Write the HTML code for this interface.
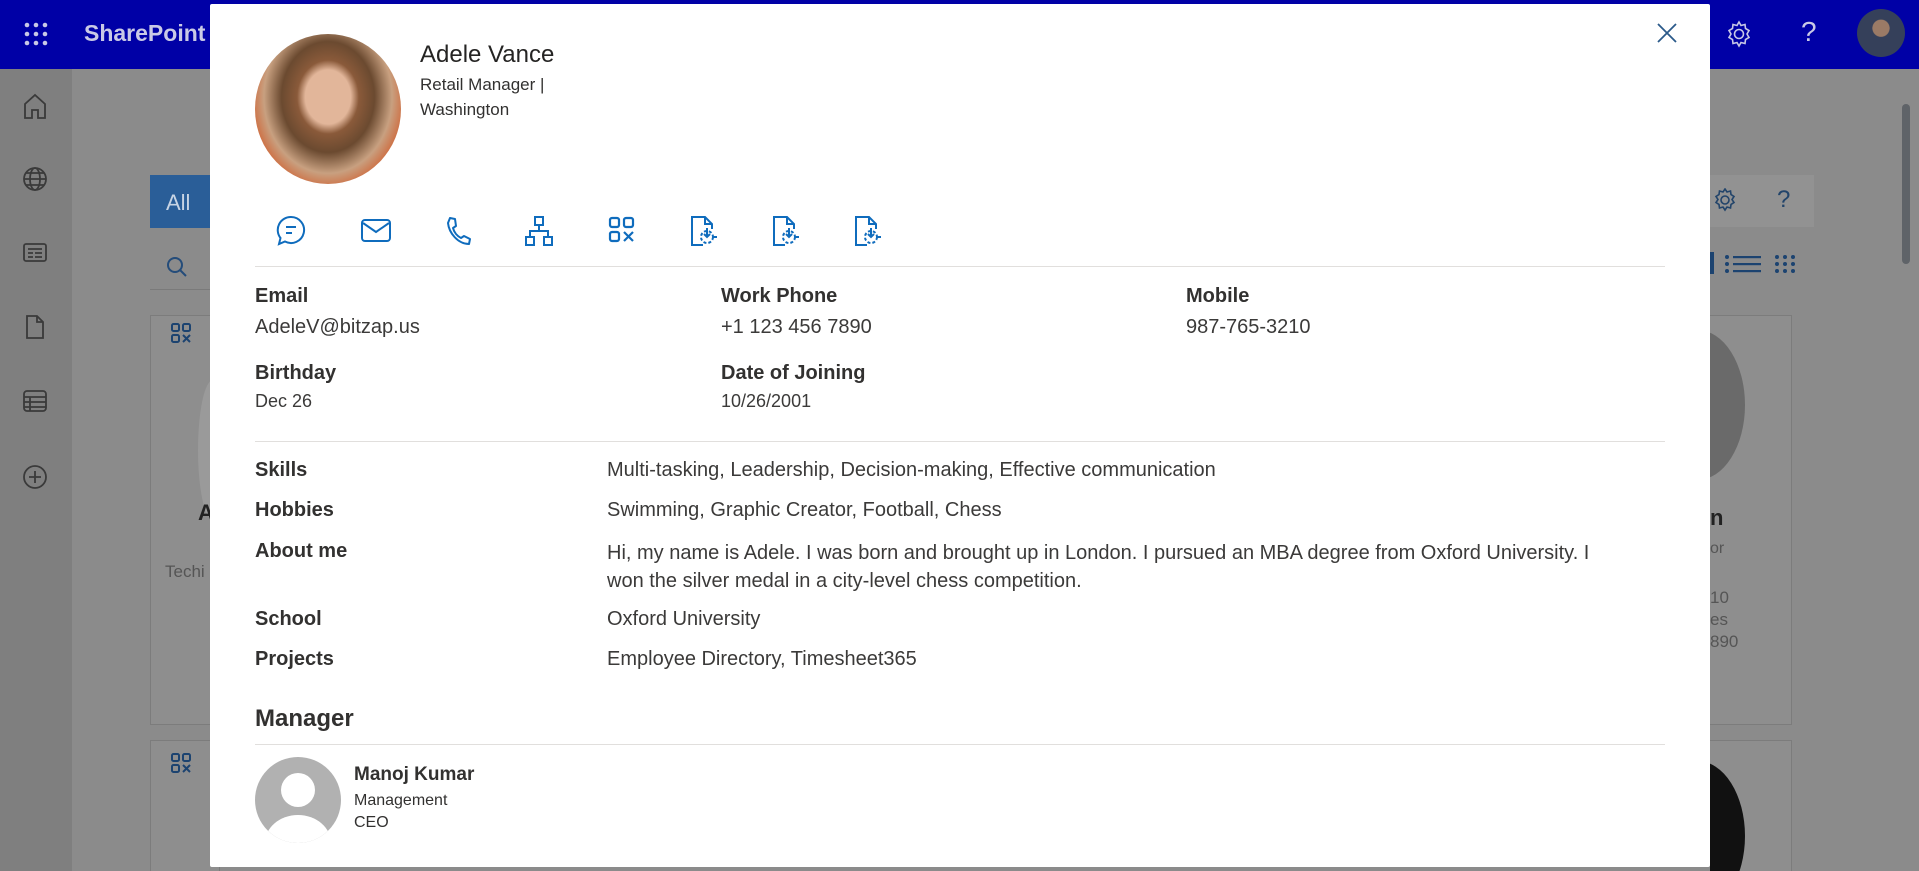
<!DOCTYPE html>
<html style="width:1919px;height:871px;overflow:hidden"><head><meta charset="utf-8"><style>
*{margin:0;padding:0;box-sizing:border-box}
body{width:1919px;height:871px;overflow:hidden;background:#8b8b8b;font-family:"Liberation Sans",sans-serif;position:relative}
.abs{position:absolute}
.hdr{left:0;top:0;width:1919px;height:69px;background:#0000a6}
.rail{left:0;top:69px;width:72px;height:802px;background:#7f7f7f}
.modal{left:210px;top:4px;width:1500px;height:863px;background:#fff;border-radius:2px}
.t{position:absolute;color:#323130;white-space:nowrap}
.lbl{font-size:20px;font-weight:bold;color:#323130}
.val{font-size:20px;color:#3b3a39}
.hr{position:absolute;height:1px;background:#e1dfdd;left:45px;width:1410px}
.ic{position:absolute;top:211px}
</style></head><body>
<div class="abs hdr"></div>
<svg class="abs" style="left:24px;top:22px" width="24" height="24" fill="#c9c9e6"><circle cx="3" cy="3" r="2.3"/><circle cx="12" cy="3" r="2.3"/><circle cx="21" cy="3" r="2.3"/><circle cx="3" cy="12" r="2.3"/><circle cx="12" cy="12" r="2.3"/><circle cx="21" cy="12" r="2.3"/><circle cx="3" cy="21" r="2.3"/><circle cx="12" cy="21" r="2.3"/><circle cx="21" cy="21" r="2.3"/></svg>
<div class="abs" style="left:84px;top:20px;font-size:23px;font-weight:bold;color:#c9c9e6">SharePoint</div>
<svg class="abs" style="left:1725px;top:20px" width="28" height="28" fill="none" stroke="#c9c9e6" stroke-width="1.6"><circle cx="14" cy="14" r="4.5"/><path d="M14 2l2 3.5 4-1 .5 4 3.5 2-2 3.5 2 3.5-3.5 2-.5 4-4-1-2 3.5-2-3.5-4 1-.5-4-3.5-2 2-3.5-2-3.5 3.5-2 .5-4 4 1z"/></svg>
<div class="abs" style="left:1801px;top:16px;font-size:28px;color:#c9c9e6">?</div>
<div class="abs" style="left:1857px;top:9px;width:48px;height:48px;border-radius:50%;background:radial-gradient(circle at 50% 40%,#9a7a66 0 22%,#35405a 24% 100%)"></div>
<div class="abs rail"></div>
<svg class="abs" style="left:22px;top:92px" width="26" height="400" fill="none" stroke="#3a3a3a" stroke-width="1.8">
<path d="M3 26V12L13 3l10 9v14h-7v-8h-6v8z"/>
<g transform="translate(0,74)"><circle cx="13" cy="13" r="11"/><ellipse cx="13" cy="13" rx="5" ry="11"/><path d="M2 13h22M4 7h18M4 19h18"/></g>
<g transform="translate(0,148)"><rect x="2" y="4" width="22" height="17" rx="2"/><path d="M6 9h14M6 13h5M6 17h5M13 13h7M13 17h7"/></g>
<g transform="translate(0,222)"><path d="M5 2h10l6 6v16H5z M15 2v6h6"/></g>
<g transform="translate(0,296)"><rect x="2" y="3" width="22" height="20" rx="3"/><path d="M2 9h22M2 14h22M2 19h22M8 9v14"/></g>
<g transform="translate(0,370)"><circle cx="13" cy="15" r="11"/><path d="M13 9v12M7 15h12"/></g>
</svg>
<div class="abs" style="left:150px;top:175px;width:62px;height:53px;background:#2a5e98"></div>
<div class="abs" style="left:166px;top:190px;color:#c7d4e4;font-size:22px">All</div>
<div class="abs" style="left:150px;top:240px;width:62px;height:50px;border-bottom:1px solid #7a7a7a"></div>
<svg class="abs" style="left:166px;top:256px" width="22" height="22" fill="none" stroke="#244c7a" stroke-width="2"><circle cx="9" cy="9" r="7"/><path d="M14 14l6 6"/></svg>
<div class="abs" style="left:150px;top:315px;width:70px;height:410px;border:1px solid #7c7c7c;background:#8e8e8e"></div>
<div class="abs" style="left:150px;top:740px;width:70px;height:131px;border:1px solid #7c7c7c;border-bottom:none;background:#8e8e8e"></div>
<div class="abs" style="left:198px;top:380px;width:30px;height:140px;border-radius:50%;background:#9a9a9a"></div>
<div class="abs" style="left:198px;top:500px;font-size:22px;font-weight:bold;color:#222">A</div>
<div class="abs" style="left:165px;top:562px;font-size:17px;color:#555">Techi</div>
<div class="abs" style="left:1710px;top:315px;width:82px;height:410px;border:1px solid #7c7c7c;border-left:none;background:#8e8e8e"></div>
<div class="abs" style="left:1650px;top:330px;width:95px;height:150px;border-radius:50%;background:#6a6a6a"></div>
<div class="abs" style="left:1710px;top:505px;font-size:22px;font-weight:bold;color:#222">n</div>
<div class="abs" style="left:1710px;top:540px;font-size:16px;color:#555">or</div>
<div class="abs" style="left:1710px;top:587px;font-size:17px;color:#555;line-height:22px">10<br>es<br>890</div>
<div class="abs" style="left:1710px;top:740px;width:82px;height:131px;border:1px solid #7c7c7c;border-left:none;border-bottom:none;background:#8e8e8e;overflow:hidden"><div style="position:absolute;left:-60px;top:20px;width:95px;height:150px;border-radius:50%;background:#111"></div></div>
<div class="abs" style="left:1710px;top:175px;width:104px;height:52px;background:#929292"></div>
<svg class="abs" style="left:1713px;top:188px" width="24" height="24" fill="none" stroke="#22446a" stroke-width="1.6"><circle cx="12" cy="12" r="4"/><path d="M12 1l2 3 3.5-1 .5 3.5 3 2-2 3 2 3-3 2-.5 3.5-3.5-1-2 3-2-3-3.5 1-.5-3.5-3-2 2-3-2-3 3-2 .5-3.5 3.5 1z"/></svg>
<div class="abs" style="left:1777px;top:186px;font-size:24px;color:#22446a">?</div>
<svg class="abs" style="left:1710px;top:250px" width="96" height="30" fill="#1c4370"><rect x="0" y="2" width="4" height="22"/><circle cx="17" cy="7" r="2"/><circle cx="17" cy="14" r="2"/><circle cx="17" cy="21" r="2"/><rect x="23" y="6" width="28" height="2.2"/><rect x="23" y="13" width="28" height="2.2"/><rect x="23" y="20" width="28" height="2.2"/><g><circle cx="67" cy="7" r="2"/><circle cx="75" cy="7" r="2"/><circle cx="83" cy="7" r="2"/><circle cx="67" cy="14" r="2"/><circle cx="75" cy="14" r="2"/><circle cx="83" cy="14" r="2"/><circle cx="67" cy="21" r="2"/><circle cx="75" cy="21" r="2"/><circle cx="83" cy="21" r="2"/></g></svg>
<div class="abs" style="left:1902px;top:104px;width:8px;height:160px;border-radius:4px;background:#5f6368"></div>
<svg class="abs" style="left:170px;top:322px" width="22" height="22" fill="none" stroke="#1c4370" stroke-width="2"><rect x="2" y="2" width="7" height="7" rx="1.5"/><rect x="13" y="2" width="7" height="7" rx="1.5"/><rect x="2" y="13" width="7" height="7" rx="1.5"/><path d="M13 13l7 7M20 13l-7 7"/></svg>
<svg class="abs" style="left:170px;top:752px" width="22" height="22" fill="none" stroke="#1c4370" stroke-width="2"><rect x="2" y="2" width="7" height="7" rx="1.5"/><rect x="13" y="2" width="7" height="7" rx="1.5"/><rect x="2" y="13" width="7" height="7" rx="1.5"/><path d="M13 13l7 7M20 13l-7 7"/></svg>

<div class="abs modal">
<div class="abs" style="left:45px;top:30px;width:146px;height:150px;border-radius:50%;background:radial-gradient(ellipse at 50% 42%,#e2b69a 0 22%,#8a5a3a 30%,#6b4a30 45%,#c8a080 62%,#d06030 78%,#e8d8c8 90%)"></div>
<div class="t" style="left:210px;top:37px;font-size:24px;color:#252423">Adele Vance</div>
<div class="t" style="left:210px;top:71px;font-size:17px">Retail Manager |</div>
<div class="t" style="left:210px;top:96px;font-size:17px">Washington</div>
<svg class="ic" style="left:66px" width="30" height="32" fill="none" stroke="#0f6cbd" stroke-width="2"><path d="M15 2a13 13 0 1 1-6 24.5L3 29l1.5-6A13 13 0 0 1 15 2z"/><path d="M10 12h10M10 18h6"/></svg>
<svg class="ic" style="left:150px" width="32" height="30" fill="none" stroke="#0f6cbd" stroke-width="2"><rect x="2" y="5" width="28" height="21" rx="3"/><path d="M3 8l13 9 13-9"/></svg>
<svg class="ic" style="left:233px" width="30" height="32" fill="none" stroke="#0f6cbd" stroke-width="2"><path d="M7 3l5 1 1 7-3 2c1 4 4 8 8 10l3-2 6 3-1 5c-11 0-20-11-21-21z" stroke-linejoin="round"/></svg>
<svg class="ic" style="left:314px" width="30" height="32" fill="none" stroke="#0f6cbd" stroke-width="2"><rect x="11" y="2" width="8" height="8"/><rect x="2" y="22" width="8" height="8"/><rect x="20" y="22" width="8" height="8"/><path d="M15 10v6M6 22v-6h18v6"/></svg>
<svg class="ic" style="left:397px" width="30" height="30" fill="none" stroke="#0f6cbd" stroke-width="2.2"><rect x="3" y="3" width="9" height="9" rx="2"/><rect x="17" y="3" width="9" height="9" rx="2"/><rect x="3" y="17" width="9" height="9" rx="2"/><path d="M17 17l9 9M26 17l-9 9"/></svg>
<svg class="ic" style="left:479px" width="32" height="32" fill="none" stroke="#0f6cbd" stroke-width="2"><path d="M14 30H3V2h13l7 7v5M16 2v7h7"/><circle cx="18" cy="22" r="6" stroke-dasharray="3 2"/><path d="M18 13v9M15 19l3 3 3-3M24 22h4"/></svg>
<svg class="ic" style="left:561px" width="32" height="32" fill="none" stroke="#0f6cbd" stroke-width="2"><path d="M14 30H3V2h13l7 7v5M16 2v7h7"/><circle cx="18" cy="22" r="6" stroke-dasharray="3 2"/><path d="M18 13v9M15 19l3 3 3-3M24 22h4"/></svg>
<svg class="ic" style="left:643px" width="32" height="32" fill="none" stroke="#0f6cbd" stroke-width="2"><path d="M14 30H3V2h13l7 7v5M16 2v7h7"/><circle cx="18" cy="22" r="6" stroke-dasharray="3 2"/><path d="M18 13v9M15 19l3 3 3-3M24 22h4"/></svg>
<svg class="abs" style="left:1447px;top:19px" width="20" height="20" stroke="#2b5a8a" stroke-width="1.8"><path d="M1 1l18 18M19 1L1 19"/></svg>
<div class="hr" style="top:262px"></div>
<div class="t lbl" style="left:45px;top:281px">Email</div>
<div class="t val" style="left:45px;top:312px">AdeleV@bitzap.us</div>
<div class="t lbl" style="left:511px;top:281px">Work Phone</div>
<div class="t val" style="left:511px;top:312px">+1 123 456 7890</div>
<div class="t lbl" style="left:976px;top:281px">Mobile</div>
<div class="t val" style="left:976px;top:312px">987-765-3210</div>
<div class="t lbl" style="left:45px;top:358px">Birthday</div>
<div class="t val" style="left:45px;top:387px;font-size:18px">Dec 26</div>
<div class="t lbl" style="left:511px;top:358px">Date of Joining</div>
<div class="t val" style="left:511px;top:387px;font-size:18px">10/26/2001</div>
<div class="hr" style="top:437px"></div>
<div class="t lbl" style="left:45px;top:455px">Skills</div>
<div class="t val" style="left:397px;top:455px">Multi-tasking, Leadership, Decision-making, Effective communication</div>
<div class="t lbl" style="left:45px;top:495px">Hobbies</div>
<div class="t val" style="left:397px;top:495px">Swimming, Graphic Creator, Football, Chess</div>
<div class="t lbl" style="left:45px;top:536px">About me</div>
<div class="t val" style="left:397px;top:535px;white-space:normal;width:1020px;line-height:28px">Hi, my name is Adele. I was born and brought up in London. I pursued an MBA degree from Oxford University. I won the silver medal in a city-level chess competition.</div>
<div class="t lbl" style="left:45px;top:604px">School</div>
<div class="t val" style="left:397px;top:604px">Oxford University</div>
<div class="t lbl" style="left:45px;top:644px">Projects</div>
<div class="t val" style="left:397px;top:644px">Employee Directory, Timesheet365</div>
<div class="t" style="left:45px;top:701px;font-size:24px;font-weight:bold">Manager</div>
<div class="hr" style="top:740px"></div>
<svg class="abs" style="left:45px;top:753px" width="86" height="86"><defs><clipPath id="c"><circle cx="43" cy="43" r="43"/></clipPath></defs><g clip-path="url(#c)"><rect width="86" height="86" fill="#b1b1b1"/><circle cx="43" cy="33" r="17" fill="#fff"/><ellipse cx="43" cy="86" rx="33" ry="28" fill="#fff"/></g></svg>
<div class="t" style="left:144px;top:760px;font-size:19px;font-weight:bold">Manoj Kumar</div>
<div class="t" style="left:144px;top:788px;font-size:16px">Management</div>
<div class="t" style="left:144px;top:810px;font-size:16px">CEO</div>
</div>
</body></html>
